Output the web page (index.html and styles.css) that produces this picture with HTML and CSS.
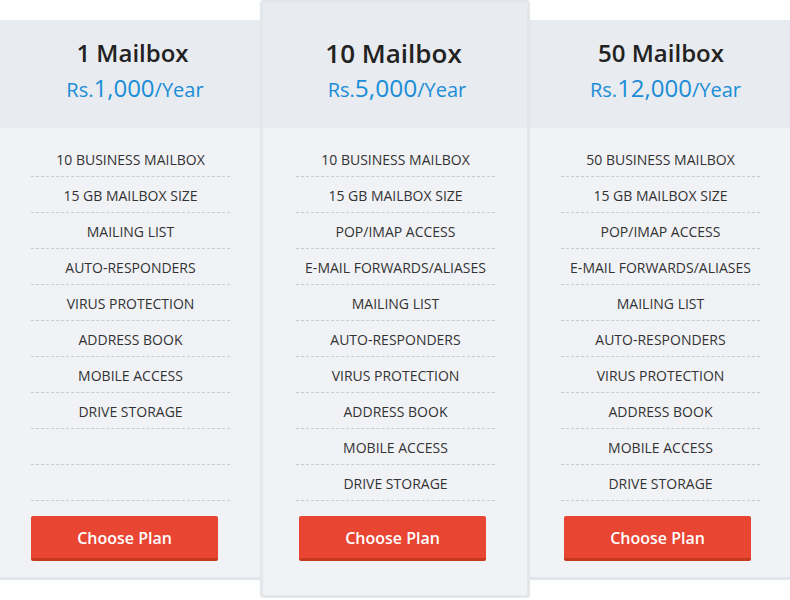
FILE: index.html
```html
<!DOCTYPE html>
<html>
<head>
<meta charset="utf-8">
<link rel="stylesheet" href="styles.css">
</head>
<body>
<div class="plans">
  <div class="plan plan-first">
    <div class="plan-head">
      <h2 class="plan-title">1 Mailbox</h2>
      <div class="price"><span class="cur">Rs.</span><span class="amt">1,000</span><span class="per">/Year</span></div>
    </div>
    <div class="plan-body">
      <ul class="features">
        <li>10 BUSINESS MAILBOX</li>
        <li>15 GB MAILBOX SIZE</li>
        <li>MAILING LIST</li>
        <li>AUTO-RESPONDERS</li>
        <li>VIRUS PROTECTION</li>
        <li>ADDRESS BOOK</li>
        <li>MOBILE ACCESS</li>
        <li>DRIVE STORAGE</li>
        <li></li>
        <li></li>
      </ul>
      <a class="btn">Choose Plan</a>
    </div>
  </div>
  <div class="plan plan-featured">
    <div class="plan-head">
      <h2 class="plan-title">10 Mailbox</h2>
      <div class="price"><span class="cur">Rs.</span><span class="amt">5,000</span><span class="per">/Year</span></div>
    </div>
    <div class="plan-body">
      <ul class="features">
        <li>10 BUSINESS MAILBOX</li>
        <li>15 GB MAILBOX SIZE</li>
        <li>POP/IMAP ACCESS</li>
        <li>E-MAIL FORWARDS/ALIASES</li>
        <li>MAILING LIST</li>
        <li>AUTO-RESPONDERS</li>
        <li>VIRUS PROTECTION</li>
        <li>ADDRESS BOOK</li>
        <li>MOBILE ACCESS</li>
        <li>DRIVE STORAGE</li>
      </ul>
      <a class="btn btn-shift">Choose Plan</a>
    </div>
  </div>
  <div class="plan plan-last">
    <div class="plan-head">
      <h2 class="plan-title">50 Mailbox</h2>
      <div class="price"><span class="cur">Rs.</span><span class="amt">12,000</span><span class="per">/Year</span></div>
    </div>
    <div class="plan-body">
      <ul class="features">
        <li>50 BUSINESS MAILBOX</li>
        <li>15 GB MAILBOX SIZE</li>
        <li>POP/IMAP ACCESS</li>
        <li>E-MAIL FORWARDS/ALIASES</li>
        <li>MAILING LIST</li>
        <li>AUTO-RESPONDERS</li>
        <li>VIRUS PROTECTION</li>
        <li>ADDRESS BOOK</li>
        <li>MOBILE ACCESS</li>
        <li>DRIVE STORAGE</li>
      </ul>
      <a class="btn btn-shift">Choose Plan</a>
    </div>
  </div>
</div>
</body>
</html>
```
FILE: styles.css
```css
html, body {
  margin: 0;
  padding: 0;
  background: #ffffff;
}
body {
  font-family: "Open Sans", "Liberation Sans", sans-serif;
  color: #333;
}
.plans {
  display: flex;
  align-items: flex-start;
  width: 790px;
}
.plan {
  width: 263px;
  margin-top: 20px;
  background: #f1f2f6;
  border-bottom: 3px solid #e2e5e9;
  flex: none;
}
.plan-featured {
  position: relative;
  z-index: 1;
  width: 264px;
  margin: 0 -3px;
  border: 3px solid #e4e7ea;
  border-radius: 4px;
  box-shadow: 0 0 2px rgba(0, 0, 0, 0.06);
}
.plan-head {
  background: #e8ebef;
  height: 108px;
  padding-top: 17px;
  box-sizing: border-box;
  text-align: center;
}
.plan-featured .plan-head {
  height: 125px;
  padding-top: 34px;
  border-radius: 2px 2px 0 0;
}
.plan-title {
  margin: 0;
  font-size: 24px;
  line-height: 32px;
  font-weight: 600;
  color: #222;
}
.plan-first .plan-title { padding-left: 2px; }
.plan-last .plan-title { padding-left: 5px; }
.plan-featured .plan-title {
  font-size: 26px;
  margin-left: -3px;
}
.price {
  margin-top: 3px;
  line-height: 32px;
  color: #1a8dd8;
  font-weight: 400;
}
.plan-first .price { padding-left: 7px; }
.plan-featured .price { padding-left: 4px; }
.plan-last .price { padding-left: 14px; }
.price .cur, .price .per {
  font-size: 20px;
}
.price .amt {
  font-size: 24px;
}
.plan-featured .price .amt {
  font-size: 24.5px;
}
.plan-body {
  padding: 13px 0 16px 31px;
}
.plan-featured .plan-body {
  padding: 13px 0 34px 33px;
}
.plan-last .plan-body {
  padding-left: 34px;
}
.features {
  list-style: none;
  margin: 0;
  padding: 0;
  width: 199px;
}
.features li {
  height: 35px;
  line-height: 37px;
  border-bottom: 1px dashed #c6cbd0;
  text-align: center;
  font-size: 14px;
  color: #333;
}
.btn {
  display: block;
  width: 187px;
  height: 42px;
  margin-top: 15px;
  background: #e84532;
  border-bottom: 3px solid #c8381f;
  border-radius: 2px;
  color: #fff;
  font-size: 16px;
  font-weight: 600;
  line-height: 44px;
  text-align: center;
  text-decoration: none;
}
.btn-shift {
  margin-left: 3px;
}
```
